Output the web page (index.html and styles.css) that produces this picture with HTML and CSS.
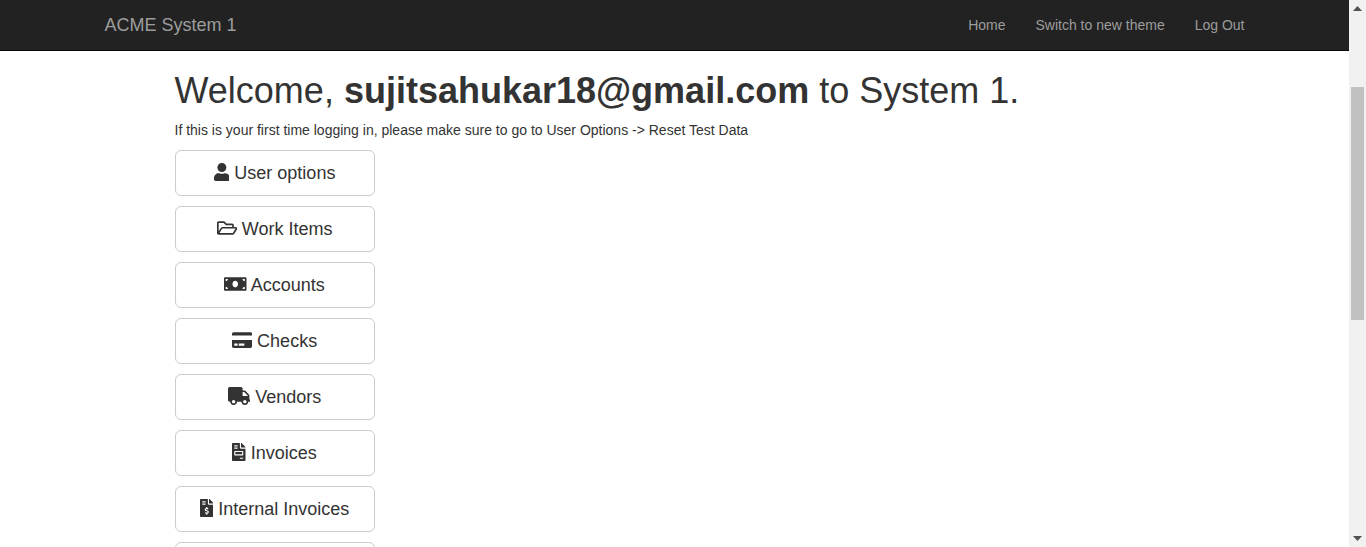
FILE: index.html
```html
<!DOCTYPE html>
<html lang="en">
<head>
<meta charset="utf-8">
<meta name="viewport" content="width=device-width, initial-scale=1">
<title>ACME System 1</title>
<link rel="stylesheet" href="styles.css">
</head>
<body>
<div class="page">
  <header class="navbar">
    <div class="container navbar-inner">
      <a class="navbar-brand" href="#">ACME System 1</a>
      <nav class="navbar-nav">
        <a href="#">Home</a>
        <a href="#">Switch to new theme</a>
        <a href="#">Log Out</a>
      </nav>
    </div>
  </header>
  <main class="container content">
    <h1>Welcome, <b>sujitsahukar18@gmail.com</b> to System 1.</h1>
    <p>If this is your first time logging in, please make sure to go to User Options -&gt; Reset Test Data</p>
    <div class="menu">
      <button class="btn" type="button"><svg class="icon" viewBox="0 0 448 512" aria-hidden="true"><path d="M224 256c70.7 0 128-57.3 128-128S294.7 0 224 0 96 57.3 96 128s57.3 128 128 128zm89.6 32h-16.7c-22.2 10.2-46.9 16-72.9 16s-50.6-5.8-72.9-16h-16.7C60.2 288 0 348.2 0 422.4V464c0 26.5 21.5 48 48 48h352c26.5 0 48-21.5 48-48v-41.6c0-74.2-60.2-134.4-134.4-134.4z"/></svg> User options</button>
      <button class="btn" type="button"><svg class="icon" viewBox="0 0 576 512" aria-hidden="true"><path d="M527.9 224H480v-48c0-26.5-21.5-48-48-48H272l-64-64H48C21.5 64 0 85.5 0 112v288c0 26.5 21.5 48 48 48h400c16.5 0 31.9-8.5 40.7-22.6l79.9-128c20-31.9-3-73.4-40.7-73.4zM48 118c0-3.3 2.7-6 6-6h134.1l64 64H426c3.3 0 6 2.7 6 6v42H152c-16.8 0-32.4 8.8-41.1 23.2L48 351.4zm400 282H72l77.2-128H528z"/></svg> Work Items</button>
      <button class="btn" type="button"><svg class="icon" viewBox="0 0 640 512" aria-hidden="true"><path d="M608 64H32C14.33 64 0 78.33 0 96v320c0 17.67 14.33 32 32 32h576c17.67 0 32-14.33 32-32V96c0-17.67-14.33-32-32-32zM48 400v-64c35.35 0 64 28.65 64 64H48zm0-224v-64h64c0 35.35-28.65 64-64 64zm272 176c-44.19 0-80-42.99-80-96 0-53.02 35.82-96 80-96s80 42.98 80 96c0 53.03-35.83 96-80 96zm272 48h-64c0-35.35 28.65-64 64-64v64zm0-224c-35.35 0-64-28.65-64-64h64v64z"/></svg> Accounts</button>
      <button class="btn" type="button"><svg class="icon" viewBox="0 0 576 512" aria-hidden="true"><path d="M0 432c0 26.5 21.5 48 48 48h480c26.5 0 48-21.5 48-48V256H0v176zm192-68c0-6.6 5.4-12 12-12h136c6.6 0 12 5.4 12 12v40c0 6.6-5.4 12-12 12H204c-6.6 0-12-5.4-12-12v-40zm-128 0c0-6.6 5.4-12 12-12h72c6.6 0 12 5.4 12 12v40c0 6.6-5.4 12-12 12H76c-6.6 0-12-5.4-12-12v-40zM576 80v48H0V80c0-26.5 21.5-48 48-48h480c26.5 0 48 21.5 48 48z"/></svg> Checks</button>
      <button class="btn" type="button"><svg class="icon" viewBox="0 0 640 512" aria-hidden="true"><path d="M624 352h-16V243.9c0-12.7-5.1-24.9-14.1-33.9L494 110.1c-9-9-21.2-14.1-33.9-14.1H416V48c0-26.5-21.5-48-48-48H48C21.5 0 0 21.5 0 48v320c0 26.5 21.5 48 48 48h16c0 53 43 96 96 96s96-43 96-96h128c0 53 43 96 96 96s96-43 96-96h48c8.8 0 16-7.2 16-16v-32c0-8.8-7.2-16-16-16zM160 464c-26.5 0-48-21.5-48-48s21.5-48 48-48 48 21.5 48 48-21.5 48-48 48zm320 0c-26.5 0-48-21.5-48-48s21.5-48 48-48 48 21.5 48 48-21.5 48-48 48zm80-208H416V144h44.1l99.9 99.9V256z"/></svg> Vendors</button>
      <button class="btn" type="button"><svg class="icon" viewBox="0 0 384 512" aria-hidden="true"><path d="M288 256H96v64h192v-64zm89-151L279.1 7c-4.5-4.5-10.6-7-17-7H256v128h128v-6.1c0-6.3-2.5-12.4-7-16.9zm-153 31V0H24C10.7 0 0 10.7 0 24v464c0 13.3 10.7 24 24 24h336c13.3 0 24-10.7 24-24V160H248c-13.2 0-24-10.8-24-24zM64 72c0-4.42 3.58-8 8-8h80c4.42 0 8 3.58 8 8v16c0 4.42-3.58 8-8 8H72c-4.42 0-8-3.58-8-8V72zm0 64c0-4.42 3.58-8 8-8h80c4.42 0 8 3.58 8 8v16c0 4.42-3.58 8-8 8H72c-4.42 0-8-3.58-8-8v-16zm256 304c0 4.42-3.58 8-8 8h-80c-4.42 0-8-3.58-8-8v-16c0-4.42 3.58-8 8-8h80c4.42 0 8 3.58 8 8v16zm0-200v96c0 8.84-7.16 16-16 16H80c-8.84 0-16-7.16-16-16v-96c0-8.84 7.16-16 16-16h224c8.84 0 16 7.16 16 16z"/></svg> Invoices</button>
      <button class="btn" type="button"><svg class="icon" viewBox="0 0 384 512" aria-hidden="true"><path d="M377 105L279.1 7c-4.5-4.5-10.6-7-17-7H256v128h128v-6.1c0-6.3-2.5-12.4-7-16.9zm-153 31V0H24C10.7 0 0 10.7 0 24v464c0 13.3 10.7 24 24 24h336c13.3 0 24-10.7 24-24V160H248c-13.2 0-24-10.8-24-24zM64 72c0-4.42 3.58-8 8-8h80c4.42 0 8 3.58 8 8v16c0 4.42-3.58 8-8 8H72c-4.42 0-8-3.58-8-8V72zm0 80v-16c0-4.42 3.58-8 8-8h80c4.42 0 8 3.58 8 8v16c0 4.42-3.58 8-8 8H72c-4.42 0-8-3.58-8-8zm144 263.88V440c0 4.42-3.58 8-8 8h-16c-4.42 0-8-3.58-8-8v-24.29c-11.29-.58-22.27-4.52-31.37-11.35-3.9-2.93-4.1-8.77-.57-12.14l11.75-11.21c2.77-2.64 6.89-2.76 10.13-.73 3.87 2.42 8.26 3.72 12.82 3.72h28.11c6.5 0 11.8-5.92 11.8-13.19 0-5.95-3.61-11.19-8.77-12.73l-45-13.5c-18.59-5.58-31.58-23.42-31.58-43.39 0-24.52 19.05-44.44 42.67-45.07V232c0-4.42 3.58-8 8-8h16c4.42 0 8 3.58 8 8v24.29c11.29.58 22.27 4.51 31.37 11.35 3.9 2.93 4.1 8.77.57 12.14l-11.75 11.21c-2.77 2.64-6.89 2.76-10.13.73-3.87-2.43-8.26-3.72-12.82-3.72h-28.11c-6.5 0-11.8 5.92-11.8 13.19 0 5.95 3.61 11.19 8.77 12.73l45 13.5c18.59 5.58 31.58 23.42 31.58 43.39 0 24.53-19.05 44.44-42.67 45.07z"/></svg> Internal Invoices</button>
      <button class="btn" type="button"></button>
    </div>
  </main>
</div>
<div class="scrollbar" aria-hidden="true">
  <svg class="scroll-arrow" viewBox="0 0 17 17"><path d="M4 11L8.5 6L13 11z"/></svg>
  <div class="scroll-track"><div class="scroll-thumb"></div></div>
  <svg class="scroll-arrow" viewBox="0 0 17 17"><path d="M4 6L8.5 11L13 6z"/></svg>
</div>
</body>
</html>
```

FILE: styles.css
```css
* {
  box-sizing: border-box;
}

body {
  display: flex;
  height: 100vh;
  margin: 0;
  overflow: hidden;
  background: #fff;
  color: #333;
  font: 14px/20px "Liberation Sans", Arial, sans-serif;
}

.page {
  flex: 1;
  min-width: 0;
  overflow: hidden;
}

.container {
  width: 100%;
  max-width: 1170px;
  margin: 0 auto;
  padding: 0 15px;
}

.navbar {
  margin-bottom: 20px;
  background: #222;
  border-bottom: 1px solid #080808;
}

.navbar a {
  color: #9d9d9d;
  text-decoration: none;
}

.navbar a:hover {
  color: #fff;
}

.navbar-inner {
  display: flex;
  justify-content: space-between;
  padding: 0;
}

.navbar-brand {
  padding: 15px;
  font-size: 18px;
}

.navbar-nav {
  display: flex;
}

.navbar-nav a {
  padding: 15px;
}

.content {
  padding: 0 85px;
}

h1 {
  margin: 0 0 10px;
  font-size: 36px;
  font-weight: 400;
  line-height: 39px;
}

p {
  margin: 0 0 10px;
}

.menu {
  display: flex;
  flex-direction: column;
  align-items: flex-start;
  gap: 10px;
}

.btn {
  width: 200px;
  min-height: 46px;
  padding: 10px 16px;
  border: 1px solid #ccc;
  border-radius: 6px;
  background: #fff;
  color: #333;
  font: 18px/24px "Liberation Sans", Arial, sans-serif;
  white-space: nowrap;
  cursor: pointer;
}

.btn:hover {
  background: #e6e6e6;
}

.icon {
  height: 18px;
  vertical-align: -2px;
  fill: currentColor;
}

.scrollbar {
  display: flex;
  flex-direction: column;
  flex: 0 0 17px;
  background: #f1f1f1;
}

.scroll-arrow {
  width: 17px;
  height: 17px;
  fill: #505050;
}

.scroll-track {
  display: grid;
  flex: 1;
  grid-template-rows: 70fr 233fr 210fr;
  padding: 0 2px;
}

.scroll-thumb {
  grid-row: 2;
  background: #c1c1c1;
}
```
